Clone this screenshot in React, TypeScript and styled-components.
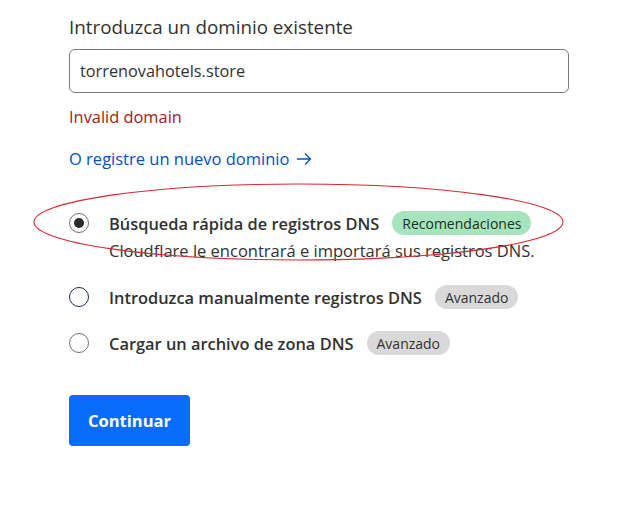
import React from "react";
import styled, { createGlobalStyle } from "styled-components";

const Global = createGlobalStyle`
  html, body { margin: 0; padding: 0; background: #ffffff; }
  body { font-family: "Open Sans", "Noto Sans", Arial, sans-serif; color: #313131; }
  * { box-sizing: border-box; }
`;

const Page = styled.div`
  position: relative;
  width: 630px;
  height: 522px;
  padding: 15px 0 0 69px;
  overflow: hidden;
`;

const Field = styled.div`
  display: flex;
  flex-direction: column;
  width: 500px;
`;

const Label = styled.label`
  font-size: 18.8px;
  line-height: 24px;
  color: #313131;
`;

const Input = styled.input`
  margin-top: 10px;
  height: 44px;
  width: 100%;
  padding: 0 10px;
  border: 1px solid #7a7a7a;
  border-radius: 6px;
  font-family: inherit;
  font-size: 16.3px;
  color: #313131;
  background: #fff;
  outline: none;
`;

const ErrorText = styled.div`
  margin-top: 12px;
  font-size: 16.4px;
  line-height: 24px;
  color: #a11a1a;
`;

const Link = styled.a`
  margin-top: 18px;
  font-size: 16.5px;
  line-height: 24px;
  color: #0051c3;
  text-decoration: none;
  display: inline-flex;
  align-items: center;
  gap: 7px;
`;

const Options = styled.div`
  margin-top: 40px;
  display: flex;
  flex-direction: column;
  gap: 22px;
`;

const Option = styled.div`
  display: grid;
  grid-template-columns: 20px 1fr;
  column-gap: 20px;
  align-items: start;
`;

const Radio = styled.span<{ $checked?: boolean; $focus?: boolean }>`
  width: 20px;
  height: 20px;
  margin-top: 2px;
  border-radius: 50%;
  border: 1.5px solid ${(p) => (p.$focus ? "#1c2a4a" : "#6f6f6f")};
  display: flex;
  align-items: center;
  justify-content: center;
  background: #fff;
  &::after {
    content: "";
    display: ${(p) => (p.$checked ? "block" : "none")};
    width: 10px;
    height: 10px;
    border-radius: 50%;
    background: #2b2b2b;
  }
`;

const Body = styled.div`
  display: flex;
  flex-direction: column;
  gap: 4px;
`;

const TitleRow = styled.div`
  display: flex;
  align-items: center;
  gap: 13px;
  height: 24px;
`;

const Title = styled.span`
  font-size: 16.4px;
  font-weight: 600;
  color: #313131;
  white-space: nowrap;
`;

const Badge = styled.span<{ $tone: "green" | "gray" }>`
  display: inline-flex;
  align-items: center;
  height: 24px;
  padding: 0 10px;
  border-radius: 12px;
  font-size: 14px;
  white-space: nowrap;
  background: ${(p) => (p.$tone === "green" ? "#a7e4bd" : "#d9d9d9")};
  color: ${(p) => (p.$tone === "green" ? "#17301f" : "#333333")};
`;

const Desc = styled.div`
  font-size: 16.5px;
  line-height: 24px;
  color: #313131;
`;

const Button = styled.button`
  margin-top: 40px;
  width: 121px;
  height: 51px;
  border: none;
  border-radius: 4px;
  background: #0a6cff;
  color: #fff;
  font-family: inherit;
  font-size: 16.5px;
  font-weight: 700;
  cursor: pointer;
`;

const Annotation = styled.svg`
  position: absolute;
  left: 0;
  top: 0;
  pointer-events: none;
`;

export default function App() {
  return (
    <>
      <Global />
      <Page>
        <Field>
          <Label>Introduzca un dominio existente</Label>
          <Input defaultValue="torrenovahotels.store" />
          <ErrorText>Invalid domain</ErrorText>
          <div>
            <Link href="#">
              O registre un nuevo dominio
              <svg width="16" height="16" viewBox="0 0 16 16" fill="none">
                <path d="M1 8h13.5M9 2.5l5.5 5.5L9 13.5" stroke="#0051c3" strokeWidth="1.3" />
              </svg>
            </Link>
          </div>
        </Field>

        <Options>
          <Option>
            <Radio $checked />
            <Body>
              <TitleRow>
                <Title>Búsqueda rápida de registros DNS</Title>
                <Badge $tone="green">Recomendaciones</Badge>
              </TitleRow>
              <Desc>Cloudflare le encontrará e importará sus registros DNS.</Desc>
            </Body>
          </Option>
          <Option>
            <Radio $focus />
            <Body>
              <TitleRow>
                <Title>Introduzca manualmente registros DNS</Title>
                <Badge $tone="gray">Avanzado</Badge>
              </TitleRow>
            </Body>
          </Option>
          <Option>
            <Radio />
            <Body>
              <TitleRow>
                <Title>Cargar un archivo de zona DNS</Title>
                <Badge $tone="gray">Avanzado</Badge>
              </TitleRow>
            </Body>
          </Option>
        </Options>

        <Button>Continuar</Button>

        <Annotation width="630" height="522" viewBox="0 0 630 522">
          <ellipse cx="298.5" cy="222" rx="264.5" ry="38" fill="none" stroke="#d42a35" strokeWidth="1.1" />
        </Annotation>
      </Page>
    </>
  );
}
